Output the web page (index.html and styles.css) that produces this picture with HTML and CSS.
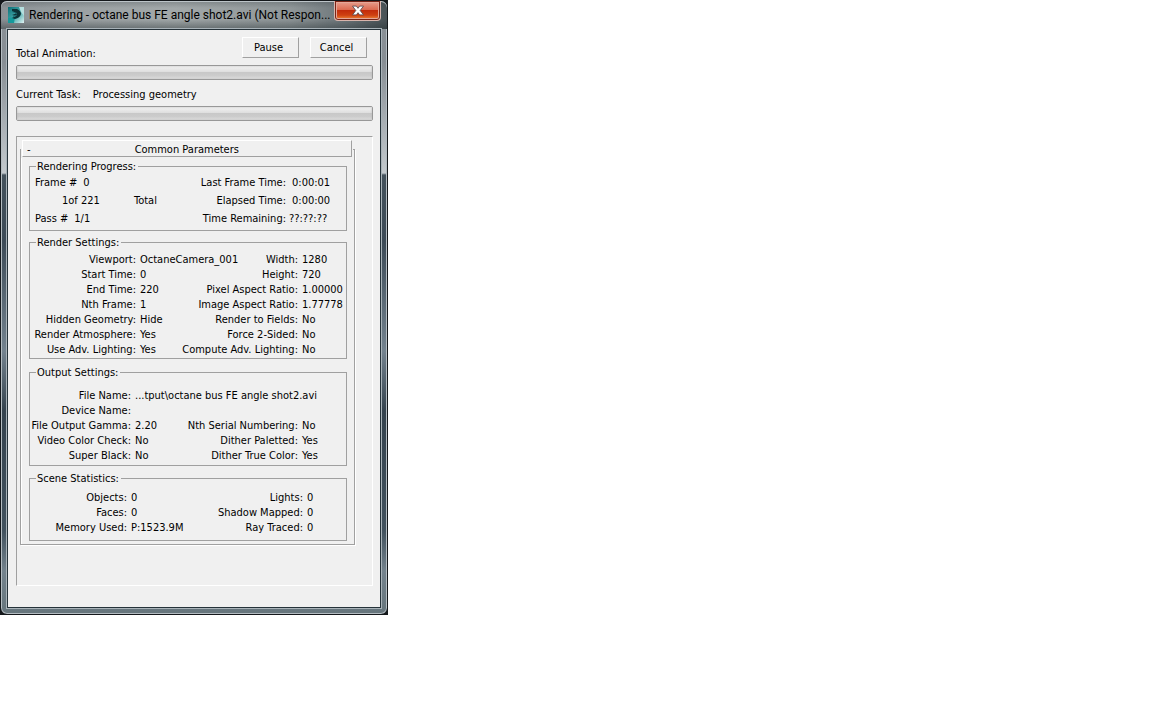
FILE: index.html
```html
<!DOCTYPE html>
<html lang="en">
<head>
	<meta charset="utf-8">
	<title>Rendering</title>
	<meta name="viewport" content="width=device-width, initial-scale=1">
	<link rel="stylesheet" href="styles.css">
</head>

<body>
	<div class="backdrop">
	<main class="window">
		<header class="titlebar">
			<svg class="app-icon" viewBox="0 0 16 16" aria-hidden="true">
				<defs>
					<linearGradient id="teal" x1="0" y1="0" x2="1" y2="1">
						<stop offset="0" stop-color="#0b6f78"/>
						<stop offset="0.5" stop-color="#3fa5a6"/>
						<stop offset="1" stop-color="#e2f4f4"/>
					</linearGradient>
				</defs>
				<rect width="16" height="16" fill="url(#teal)"/>
				<path d="M0 11 L7 10 L6 16 H0Z" fill="#159a9c"/>
				<path d="M11 0 H16 V9 L13 5Z" fill="#b5dfdf"/>
				<path d="M4 2 L9 2 Q13 4 13 7 Q12 11 7 12 L4 11 L8 9 L4 8 L8 6.500 L4 4Z" fill="#0c3237"/>
				<path d="M4 4.500 L9 6.500 M5 9.500 L9 8" stroke="#1c7077" fill="none"/>
			</svg>
			<h1>Rendering - octane bus FE angle shot2.avi (Not Respon...</h1>
			<button class="close" aria-label="Close">
				<svg viewBox="0 0 12 10" aria-hidden="true">
					<path d="M1 1 H4.500 L6 3 L7.500 1 H11 L8 5 L11 9 H7.500 L6 7 L4.500 9 H1 L4 5Z" fill="#fff" stroke="#5b4a4e" stroke-width="0.8"/>
				</svg>
			</button>
		</header>

		<div class="client">
			<div class="top-row">
				<label for="total">Total Animation:</label>
				<div class="actions">
					<button>Pause</button>
					<button>Cancel</button>
				</div>
			</div>
			<progress id="total" value="0" max="100"></progress>
			<div class="task-row">
				<label for="task">Current Task:</label>
				<span>Processing geometry</span>
			</div>
			<progress id="task" value="0" max="100"></progress>

			<div class="panel">
				<section class="rollup">
					<button class="rollup-head"><span class="sign">-</span><span class="name">Common Parameters</span></button>

					<fieldset class="progress-group">
						<legend>Rendering Progress:</legend>
						<div class="line">
							<span>Frame #</span><span class="num">0</span>
							<span class="time-label">Last Frame Time:</span><span class="time">0:00:01</span>
						</div>
						<div class="line">
							<span class="count">1of 221</span><span>Total</span>
							<span class="time-label">Elapsed Time:</span><span class="time">0:00:00</span>
						</div>
						<div class="line">
							<span>Pass #</span><span class="num">1/1</span>
							<span class="time-label">Time Remaining:</span><span class="time unknown">??:??:??</span>
						</div>
					</fieldset>

					<fieldset class="render-group">
						<legend>Render Settings:</legend>
						<div class="row"><span class="key">Viewport:</span><span class="val">OctaneCamera_001</span><span class="key2">Width:</span><span class="val2">1280</span></div>
						<div class="row"><span class="key">Start Time:</span><span class="val">0</span><span class="key2">Height:</span><span class="val2">720</span></div>
						<div class="row"><span class="key">End Time:</span><span class="val">220</span><span class="key2">Pixel Aspect Ratio:</span><span class="val2">1.00000</span></div>
						<div class="row"><span class="key">Nth Frame:</span><span class="val">1</span><span class="key2">Image Aspect Ratio:</span><span class="val2">1.77778</span></div>
						<div class="row"><span class="key">Hidden Geometry:</span><span class="val">Hide</span><span class="key2">Render to Fields:</span><span class="val2">No</span></div>
						<div class="row"><span class="key">Render Atmosphere:</span><span class="val">Yes</span><span class="key2">Force 2-Sided:</span><span class="val2">No</span></div>
						<div class="row"><span class="key">Use Adv. Lighting:</span><span class="val">Yes</span><span class="key2">Compute Adv. Lighting:</span><span class="val2">No</span></div>
					</fieldset>

					<fieldset class="output-group">
						<legend>Output Settings:</legend>
						<div class="row"><span class="key">File Name:</span><span class="val">...tput\octane bus FE angle shot2.avi</span></div>
						<div class="row"><span class="key">Device Name:</span></div>
						<div class="row"><span class="key">File Output Gamma:</span><span class="val">2.20</span><span class="key2">Nth Serial Numbering:</span><span class="val2">No</span></div>
						<div class="row"><span class="key">Video Color Check:</span><span class="val">No</span><span class="key2">Dither Paletted:</span><span class="val2">Yes</span></div>
						<div class="row"><span class="key">Super Black:</span><span class="val">No</span><span class="key2">Dither True Color:</span><span class="val2">Yes</span></div>
					</fieldset>

					<fieldset class="stats-group">
						<legend>Scene Statistics:</legend>
						<div class="row"><span class="key">Objects:</span><span class="val">0</span><span class="key2">Lights:</span><span class="val2">0</span></div>
						<div class="row"><span class="key">Faces:</span><span class="val">0</span><span class="key2">Shadow Mapped:</span><span class="val2">0</span></div>
						<div class="row"><span class="key">Memory Used:</span><span class="val">P:1523.9M</span><span class="key2">Ray Traced:</span><span class="val2">0</span></div>
					</fieldset>
				</section>
			</div>
		</div>
	</main>
	</div>
</body>
</html>
```
FILE: styles.css
```css
* {
	box-sizing: border-box;
}

body {
	margin: 0;
	background: #fff;
	color: #000;
	font-family: Tahoma, "DejaVu Sans Condensed", sans-serif;
	font-size: 11px;
	line-height: 15px;
}

button {
	font: inherit;
	color: inherit;
	padding: 0;
}

/* Window frame */
.backdrop {
	max-width: 388px;
	background: #14181b;
}

.window {
	padding: 0 6px 6px;
	border: 1px solid #14181b;
	border-radius: 7px;
	box-shadow: inset 0 0 0 1px #b4bcc1;
	background: linear-gradient(#8b9297 0, #878e94 60px, #c3c9cd 172px, #44525c 174px, #3d4b57 240px, #74838f 350px, #35434e 410px, #42525e 530px, #74838d 570px, #66757c 100%);
}

/* Title bar */
.titlebar {
	display: flex;
	align-items: center;
	height: 28px;
	margin: 0 -6px;
	padding: 0 6px 0 7px;
	border-radius: 6px 6px 0 0;
	background:
		linear-gradient(rgba(40,50,55,0.25) 0, rgba(0,0,0,0) 7px, rgba(0,0,0,0) 18px, rgba(35,45,48,0.45) 100%),
		linear-gradient(90deg, #8b9195 0, #9ba1a3 20%, #a2a8a9 45%, #8f9698 75%, #6b7478 90%, #495256 100%);
	box-shadow: inset 0 1px 0 #bcc4c8;
}

.app-icon {
	width: 16px;
	height: 16px;
	margin-right: 5px;
}

.titlebar h1 {
	flex: 1;
	margin: 0;
	font: 12px/16px "Segoe UI", Roboto, sans-serif;
	white-space: nowrap;
}

.close {
	align-self: flex-start;
	display: flex;
	align-items: center;
	justify-content: center;
	width: 47px;
	height: 20px;
	border: 1px solid #d9b5ac;
	border-top: 0;
	border-radius: 0 0 4px 4px;
	box-shadow: inset 0 0 0 1px #7a2416, inset 0 0 0 2px #e5a798;
	background: linear-gradient(#e8a393 0, #dc6c52 45%, #c22c0b 50%, #cf4112 75%, #f0953f 100%);
}

.close svg {
	width: 14px;
	height: 11px;
}

/* Client area */
.client {
	padding: 7px 7px 21px 8px;
	border: 1px solid #26333a;
	background: #f0f0f0;
	box-shadow: 0 0 0 1px #a9b3b9;
}

.top-row {
	display: flex;
	justify-content: space-between;
	align-items: flex-end;
	height: 24px;
	margin-bottom: 4px;
}

.actions {
	display: flex;
	align-self: flex-start;
	gap: 11px;
	margin-right: 6px;
}

.actions button {
	width: 57px;
	height: 21px;
	padding-right: 4px;
	border: 1px solid;
	border-color: #fff #a0a0a0 #a0a0a0 #fff;
	background: #f0f0f0;
}

progress {
	-webkit-appearance: none;
	appearance: none;
	display: block;
	width: 100%;
	height: 15px;
	border: 1px solid #989898;
	border-radius: 2px;
	overflow: hidden;
}

progress::-webkit-progress-bar {
	background: linear-gradient(#f4f4f4 0, #dedede 45%, #c8c8c8 50%, #cccccc 75%, #e0e0e0 100%);
	box-shadow: inset 0 0 2px #b4b4b4;
}

progress::-webkit-progress-value {
	background: #3fbf4f;
}

.task-row {
	display: flex;
	gap: 12px;
	margin: 7px 0 4px;
}

/* Scrolled panel with the rollup */
.panel {
	margin-top: 15px;
	padding: 12px 17px 40px 3px;
	border: 1px solid;
	border-color: #a0a0a0 #fff #fff #a0a0a0;
}

.rollup {
	padding: 0 7px 3px 8px;
	border: 1px solid #a0a0a0;
	box-shadow: 1px 1px 0 #fff, inset 1px 0 0 #fff;
}

.rollup-head {
	display: flex;
	width: calc(100% + 12px);
	height: 17px;
	margin: -10px -5px 2px -7px;
	padding: 1px 0 0 4px;
	border: 1px solid;
	border-color: #fff #a0a0a0 #a0a0a0 #fff;
	outline: 1px solid #f0f0f0;
	background: #f0f0f0;
}

.rollup-head .name {
	flex: 1;
	padding-right: 8px;
	text-align: center;
}

/* Groups */
fieldset {
	min-width: 0;
	margin: 0;
	padding: 0;
	border: 1px solid #a0a0a0;
}

legend {
	margin-left: 6px;
	padding: 0 2px 0 1px;
}

.line {
	display: flex;
	padding-left: 5px;
	line-height: 18px;
}

.num {
	margin-left: 6px;
}

.count {
	width: 99px;
	padding-left: 27px;
}

.time-label {
	flex: 1;
	text-align: right;
}

.time {
	width: 60px;
	padding-left: 6px;
}

.time.unknown {
	padding-left: 3px;
}

.row {
	display: flex;
	gap: 4px;
	white-space: nowrap;
}

.key {
	flex-shrink: 0;
	text-align: right;
}

.key2 {
	flex: 1;
	text-align: right;
}

.val2 {
	width: 44px;
}

.progress-group {
	margin-bottom: 4px;
	padding-bottom: 2px;
}

.render-group {
	margin-bottom: 6px;
	padding: 2px 0 1px;
}

.render-group .key {
	width: 106px;
}

.output-group {
	margin-bottom: 5px;
	padding: 8px 0 2px;
}

.output-group .key {
	width: 101px;
}

.stats-group {
	padding: 4px 0 5px;
}

.stats-group .key {
	width: 97px;
}

.stats-group .val2 {
	width: 39px;
}
```
